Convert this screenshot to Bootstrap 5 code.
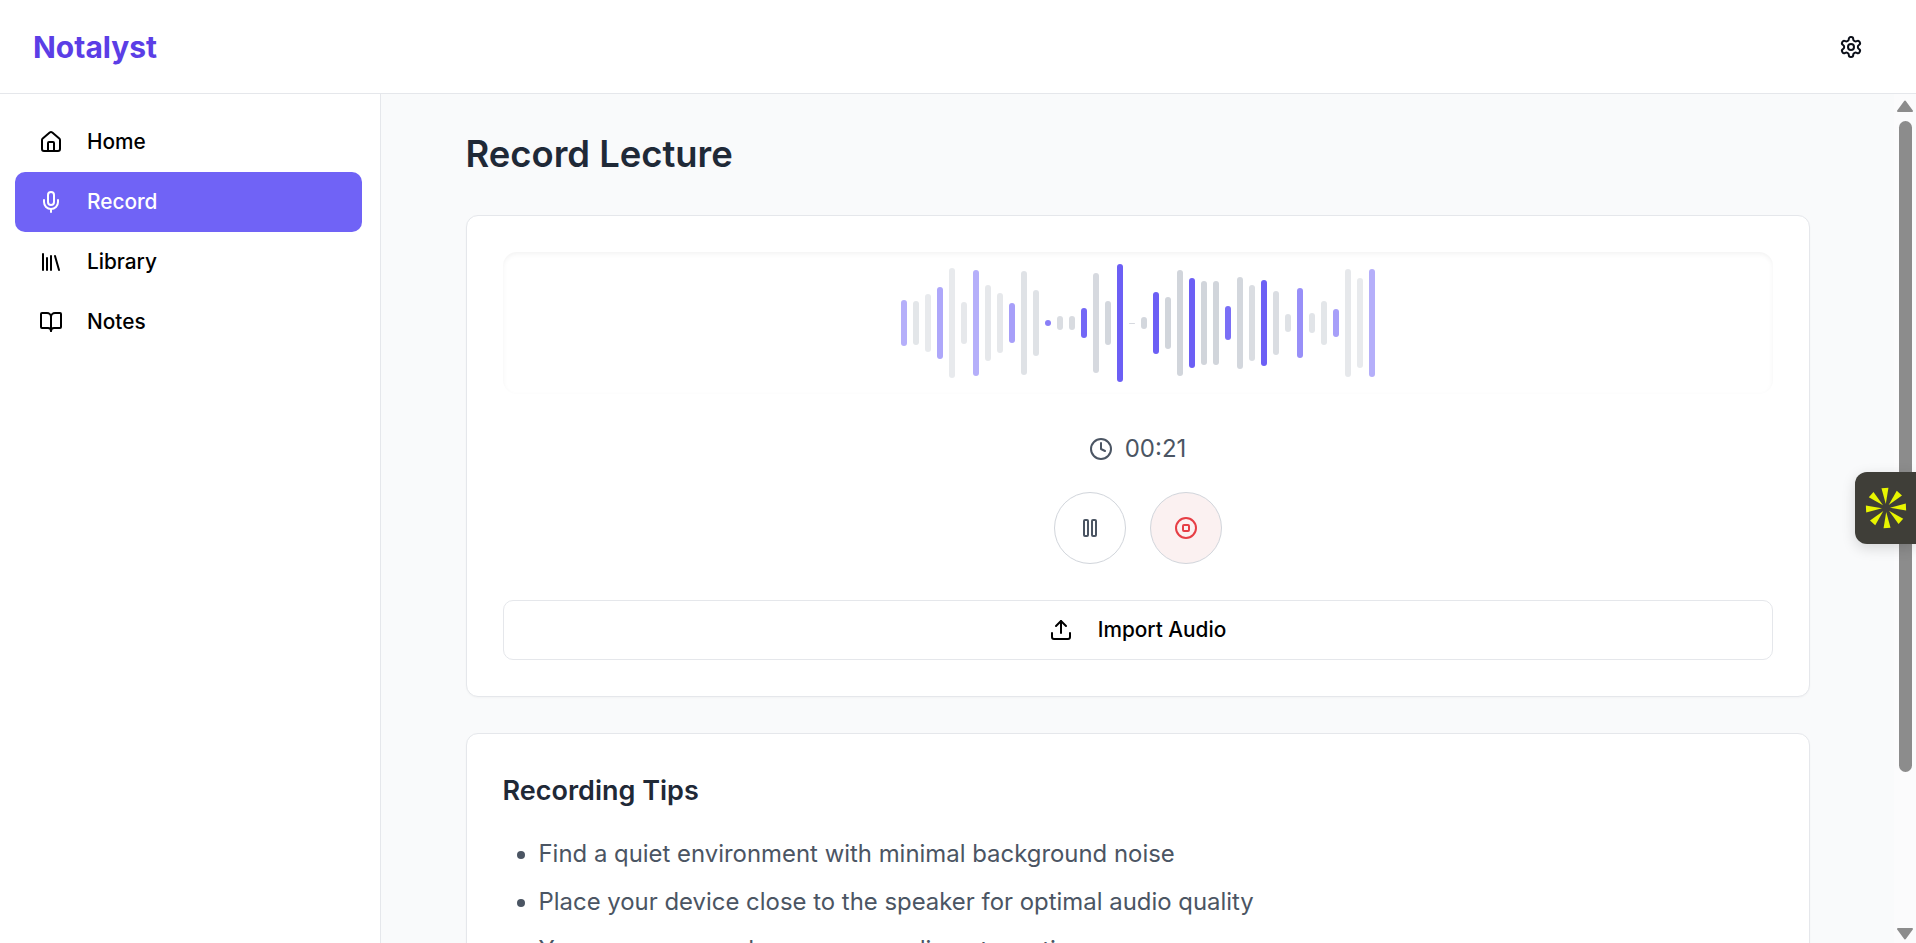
<!DOCTYPE html>
<html>
<head>
  <meta charset="utf-8">
  <title>Notalyst</title>
  <link href="https://cdn.jsdelivr.net/npm/bootstrap@5.3.0/dist/css/bootstrap.min.css" rel="stylesheet">
  <style>
    html, body { height: 100%; overflow: hidden; }
    body { font-family: "Inter", "Liberation Sans", sans-serif; background: #fff; color: #000; }
    svg.ico { width: 24px; height: 24px; fill: none; stroke: currentColor; stroke-width: 2; stroke-linecap: round; stroke-linejoin: round; flex: none; }

    .top-bar { height: 94px; padding: 0 33px; background: #fff; border-bottom: 1px solid #e5e7eb; }
    .logo-text { font-size: 30px; font-weight: 700; color: #5b3ee6; line-height: 1; padding: 0; margin: 0; }
    .settings-btn { padding: 0; border: 0; color: #0b0f19; margin-right: 20px; }

    .app-body { height: 849px; }
    .side-bar { width: 381px; flex: none; padding: 18px 18px 18px 15px; border-right: 1px solid #e5e7eb; background: #fff; }
    .side-link { height: 60px; padding: 0 24px; gap: 24px; font-size: 20.8px; font-weight: 500; color: #000; border-radius: 10px; }
    .side-link.active { background: #7063f6; color: #fff; }

    .main-pane { background: #f9fafb; overflow: hidden; min-width: 0; }
    .main-inner { width: 1344px; margin: 0 auto; padding-top: 36px; }
    .page-title { font-size: 36.4px; font-weight: 600; color: #1f2937; line-height: 48px; margin-bottom: 37px; }
    .panel { border: 1px solid #e5e7eb; border-radius: 12px; background: #fff; padding: 36px; box-shadow: 0 1px 2px rgba(0,0,0,.03); }
    .panel + .panel { margin-top: 36px; }

    .wave-box { height: 142px; border-radius: 14px; gap: 6px; box-shadow: inset 0 2px 5px rgba(0,0,0,.05); margin-bottom: 37px; }
    .wave-bar { width: 6px; border-radius: 3px; flex: none; }
    .time-row { height: 36px; gap: 12px; color: #4b5563; font-size: 24px; line-height: 36px; margin-bottom: 25px; }
    .round-btn { width: 72px; height: 72px; padding: 0; border-radius: 50%; border: 1px solid #d1d5db; background: #fff; color: #4b5563; }
    .round-btn.stop-btn { background: #fbf1f1; color: #e63e45; }
    .control-row { gap: 24px; margin-bottom: 36px; }
    .import-btn { height: 60px; width: 100%; gap: 25px; border: 1px solid #e5e7eb; border-radius: 10px; background: #fff; color: #000; font-size: 20.8px; font-weight: 500; }

    .tips-title { font-size: 27px; font-weight: 600; color: #1f2937; line-height: 42px; margin-bottom: 24px; }
    .tips-list { padding-left: 36px; margin: 0; color: #4b5563; font-size: 23.92px; }
    .tips-list li { line-height: 36px; margin-bottom: 12px; }

    .fake-scroll { width: 22px; flex: none; background: #fbfbfc; padding-top: 6px; }
    .scroll-arrow { display: block; width: 16px; height: 12px; margin: 0 auto; fill: #8c8c8c; stroke: #8c8c8c; stroke-width: 2; stroke-linejoin: round; }
    .scroll-arrow.down { margin-top: 156px; }
    .scroll-thumb { width: 13px; height: 651px; margin: 9px auto 0; background: #8c8c8c; border-radius: 7px; }

    .float-widget { position: absolute; right: 0; top: 472px; width: 61px; height: 72px; background: #3f3e38; border-radius: 12px 0 0 12px; box-shadow: 0 4px 14px rgba(0,0,0,.15); }
  </style>
</head>
<body>

<nav class="navbar top-bar d-flex justify-content-between align-items-center">
  <a class="navbar-brand logo-text" href="#">Notalyst</a>
  <button class="btn settings-btn d-flex" aria-label="Settings">
    <svg class="ico" viewBox="0 0 24 24"><path d="M12.22 2h-.44a2 2 0 0 0-2 2v.18a2 2 0 0 1-1 1.73l-.43.25a2 2 0 0 1-2 0l-.15-.08a2 2 0 0 0-2.73.73l-.22.38a2 2 0 0 0 .73 2.73l.15.1a2 2 0 0 1 1 1.72v.51a2 2 0 0 1-1 1.74l-.15.09a2 2 0 0 0-.73 2.73l.22.38a2 2 0 0 0 2.73.73l.15-.08a2 2 0 0 1 2 0l.43.25a2 2 0 0 1 1 1.73V20a2 2 0 0 0 2 2h.44a2 2 0 0 0 2-2v-.18a2 2 0 0 1 1-1.73l.43-.25a2 2 0 0 1 2 0l.15.08a2 2 0 0 0 2.73-.73l.22-.39a2 2 0 0 0-.73-2.73l-.15-.08a2 2 0 0 1-1-1.74v-.5a2 2 0 0 1 1-1.74l.15-.09a2 2 0 0 0 .73-2.73l-.22-.38a2 2 0 0 0-2.73-.73l-.15.08a2 2 0 0 1-2 0l-.43-.25a2 2 0 0 1-1-1.73V4a2 2 0 0 0-2-2z"/><circle cx="12" cy="12" r="3"/></svg>
  </button>
</nav>

<div class="app-body d-flex">
  <aside class="side-bar">
    <ul class="nav flex-column">
      <li class="nav-item">
        <a class="nav-link side-link d-flex align-items-center" href="#">
          <svg class="ico" viewBox="0 0 24 24"><path d="M15 21v-8a1 1 0 0 0-1-1h-4a1 1 0 0 0-1 1v8"/><path d="M3 10a2 2 0 0 1 .709-1.528l7-5.999a2 2 0 0 1 2.582 0l7 5.999A2 2 0 0 1 21 10v9a2 2 0 0 1-2 2H5a2 2 0 0 1-2-2z"/></svg>
          Home
        </a>
      </li>
      <li class="nav-item">
        <a class="nav-link side-link active d-flex align-items-center" href="#">
          <svg class="ico" viewBox="0 0 24 24"><path d="M12 2a3 3 0 0 0-3 3v7a3 3 0 0 0 6 0V5a3 3 0 0 0-3-3Z"/><path d="M19 10v2a7 7 0 0 1-14 0v-2"/><line x1="12" x2="12" y1="19" y2="22"/></svg>
          Record
        </a>
      </li>
      <li class="nav-item">
        <a class="nav-link side-link d-flex align-items-center" href="#">
          <svg class="ico" viewBox="0 0 24 24"><path d="m16 6 4 14"/><path d="M12 6v14"/><path d="M8 8v12"/><path d="M4 4v16"/></svg>
          Library
        </a>
      </li>
      <li class="nav-item">
        <a class="nav-link side-link d-flex align-items-center" href="#">
          <svg class="ico" viewBox="0 0 24 24"><path d="M12 7v14"/><path d="M3 18a1 1 0 0 1-1-1V4a1 1 0 0 1 1-1h5a4 4 0 0 1 4 4 4 4 0 0 1 4-4h5a1 1 0 0 1 1 1v13a1 1 0 0 1-1 1h-6a3 3 0 0 0-3 3 3 3 0 0 0-3-3z"/></svg>
          Notes
        </a>
      </li>
    </ul>
  </aside>

  <main class="main-pane flex-grow-1">
    <div class="main-inner">
      <h1 class="page-title">Record Lecture</h1>

      <section class="panel">
        <div id="wave" class="wave-box d-flex align-items-center justify-content-center"></div>

        <div class="time-row d-flex align-items-center justify-content-center">
          <svg class="ico" viewBox="0 0 24 24"><circle cx="12" cy="12" r="10"/><polyline points="12 6 12 12 16 14"/></svg>
          <span>00:21</span>
        </div>

        <div class="control-row d-flex justify-content-center">
          <button class="btn round-btn d-flex align-items-center justify-content-center" aria-label="Pause">
            <svg class="ico" viewBox="0 0 24 24"><rect x="14" y="4" width="4" height="16" rx="1"/><rect x="6" y="4" width="4" height="16" rx="1"/></svg>
          </button>
          <button class="btn round-btn stop-btn d-flex align-items-center justify-content-center" aria-label="Stop">
            <svg class="ico" viewBox="0 0 24 24"><circle cx="12" cy="12" r="10"/><rect x="9" y="9" width="6" height="6" rx="1"/></svg>
          </button>
        </div>

        <button class="btn import-btn d-flex align-items-center justify-content-center">
          <svg class="ico" viewBox="0 0 24 24"><path d="M21 15v4a2 2 0 0 1-2 2H5a2 2 0 0 1-2-2v-4"/><polyline points="17 8 12 3 7 8"/><line x1="12" x2="12" y1="3" y2="15"/></svg>
          Import Audio
        </button>
      </section>

      <section class="panel">
        <h2 class="tips-title">Recording Tips</h2>
        <ul class="tips-list">
          <li>Find a quiet environment with minimal background noise</li>
          <li>Place your device close to the speaker for optimal audio quality</li>
          <li>You can pause and resume recording at any time</li>
        </ul>
      </section>
    </div>
  </main>

  <div class="fake-scroll" aria-hidden="true">
    <svg class="scroll-arrow" viewBox="0 0 16 12"><polygon points="8,1.5 15,11 1,11"/></svg>
    <div class="scroll-thumb"></div>
    <svg class="scroll-arrow down" viewBox="0 0 16 12"><polygon points="1,1 15,1 8,10.5"/></svg>
  </div>
</div>

<div class="float-widget d-flex align-items-center justify-content-center" aria-hidden="true">
  <svg width="46" height="46" viewBox="-23 -23 46 46" id="burst"></svg>
</div>

<script>
  // height, kind (p = purple, g = gray), opacity
  const bars = [
    [46,"p",.5],[44,"g",.6],[58,"g",.5],[72,"p",.55],[110,"g",.5],[42,"g",.55],[106,"p",.5],[76,"g",.55],
    [60,"g",.55],[40,"p",.6],[104,"g",.7],[66,"g",.7],[6,"p",.8],[14,"g",.8],[14,"g",.85],[30,"p",.95],
    [100,"g",.9],[44,"g",.95],[118,"p",1],[1,"g",.9],[12,"g",.95],[62,"p",1],[52,"g",1],[106,"g",1],
    [90,"p",1],[84,"g",1],[84,"g",1],[34,"p",.9],[92,"g",.95],[76,"g",.8],[86,"p",1],[64,"g",.8],
    [18,"g",.7],[70,"p",.7],[20,"g",.65],[44,"g",.6],[28,"p",.6],[108,"g",.55],[90,"g",.5],[108,"p",.5],
  ];
  const wave = document.getElementById("wave");
  bars.forEach(([h, kind, op]) => {
    const bar = document.createElement("div");
    bar.className = "wave-bar";
    bar.style.height = h + "px";
    bar.style.opacity = op;
    bar.style.background = kind === "p" ? "#6c5ff5" : "#d1d5db";
    wave.appendChild(bar);
  });

  // eight wedges of the floating widget's mark
  let wedges = "";
  for (let i = 0; i < 8; i++) {
    wedges += `<polygon points="0,-4 3.5,-20 -3.5,-20" fill="#e8f500" transform="rotate(${i * 45 - 3})"/>`;
  }
  document.getElementById("burst").innerHTML = wedges;
</script>
<script src="https://cdn.jsdelivr.net/npm/bootstrap@5.3.0/dist/js/bootstrap.bundle.min.js"></script>
</body>
</html>
